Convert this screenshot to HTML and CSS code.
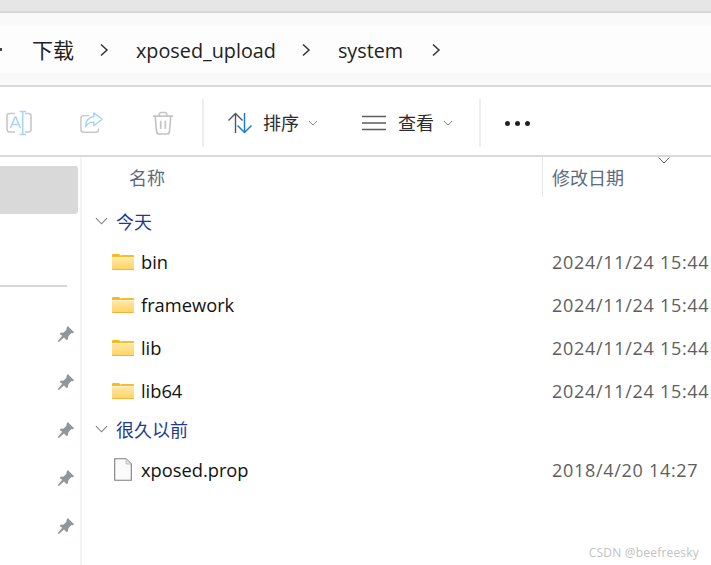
FILE: index.html
```html
<!DOCTYPE html>
<html lang="zh">
<head>
<meta charset="utf-8">
<title>system</title>
<link rel="stylesheet" href="styles.css">
</head>
<body>
<svg class="defs" width="0" height="0" aria-hidden="true">
  <defs>
    <linearGradient id="fg" x1="0" y1="0" x2="0" y2="1"><stop offset="0" stop-color="#ffe9a6"/><stop offset="1" stop-color="#ffd261"/></linearGradient>
    <symbol id="folder" viewBox="0 0 22 17">
      <path d="M0 2a1 1 0 0 1 1-1h6l2 2h-9z" fill="#fbb81d"/>
      <path d="M0 3h8l2-1h11a1 1 0 0 1 1 1v1H0z" fill="#f9bb2b"/>
      <path d="M0 4.500h22V16a1 1 0 0 1-1 1H1a1 1 0 0 1-1-1z" fill="url(#fg)"/>
      <path d="M0 16h22v0a1 1 0 0 1-1 1H1a1 1 0 0 1-1-1z" fill="#f0b43a"/>
    </symbol>
    <symbol id="pin" viewBox="0 0 16 16">
      <path d="M9.600.8l5.600 5.600-1.200 1-1.200-.2-2.700 2.700-.3 2.600-1.100 1.100-2.500-2.500-4.600 4-.9-.9 4-4.600L2.200 8l1.100-1.100 2.600-.3 2.700-2.700-.2-1.200z" fill="#8f979b"/>
    </symbol>
  </defs>
</svg>
<div class="window">
  <div class="titlebar"></div>
  <nav class="address">
    <div class="crumbs">
      <span class="tick"></span>
      <span class="crumb han">下载</span>
      <svg class="chev" viewBox="0 0 10 14"><path d="M2 1.500 8 7l-6 5.500"/></svg>
      <span class="crumb">xposed_upload</span>
      <svg class="chev" viewBox="0 0 10 14"><path d="M2 1.500 8 7l-6 5.500"/></svg>
      <span class="crumb">system</span>
      <svg class="chev last" viewBox="0 0 10 14"><path d="M2 1.500 8 7l-6 5.500"/></svg>
    </div>
  </nav>
  <div class="toolbar">
    <svg class="tool rename" viewBox="0 0 26 26">
      <path d="M9 3.500H3.500A2.500 2.500 0 0 0 1 6v13.500A2.500 2.500 0 0 0 3.500 22H9M19 3.500h3.500A2.500 2.500 0 0 1 25 6v13.500a2.500 2.500 0 0 1-2.500 2.500H19" fill="none" stroke="#c8c8c8" stroke-width="1.600"/>
      <path d="M4.500 18l4.500-11h.8l4.500 11M6 14.500h7M13.500 1.500h6.500M13.500 24.500h6.500M16.700 1.500v23" fill="none" stroke="#a6d3f5" stroke-width="1.500"/>
    </svg>
    <svg class="tool share" viewBox="0 0 26 26">
      <path d="M10 5H4a3 3 0 0 0-3 3v12a3 3 0 0 0 3 3h13a3 3 0 0 0 3-3v-1" fill="none" stroke="#c8c8c8" stroke-width="1.600"/>
      <path d="M15 2l9 7-9 7v-4c-4 0-7 1-9 5 0-6 3-10 9-11z" fill="#fff" stroke="#a6d3f5" stroke-width="1.500" stroke-linejoin="round"/>
    </svg>
    <svg class="tool trash" viewBox="0 0 24 26">
      <path d="M1 5h22M8 5V3a2 2 0 0 1 2-2h4a2 2 0 0 1 2 2v2M3.500 5l1.500 17a3 3 0 0 0 3 2.500h8a3 3 0 0 0 3-2.500l1.500-17M9.500 10v9M14.500 10v9" fill="none" stroke="#c4c4c4" stroke-width="1.800"/>
    </svg>
    <span class="divider first"></span>
    <div class="action sort">
      <svg class="sort-icon" viewBox="0 0 26 22">
        <path d="M8.500 21V1.500M1.500 8.500l7-7 7 7" fill="none" stroke="#555" stroke-width="1.400"/>
        <path d="M17.500 1v19.500M10.500 13.500l7 7 7-7" fill="none" stroke="#1a7fd0" stroke-width="1.500"/>
      </svg>
      <span class="action-label">排序</span>
      <svg class="mini" viewBox="0 0 10 6"><path d="M1 1l4 4 4-4"/></svg>
    </div>
    <div class="action view">
      <svg class="view-icon" viewBox="0 0 24 16">
        <path d="M0 1.500h24M0 8h24M0 14.500h24" fill="none" stroke="#5c5c5c" stroke-width="1.300"/>
      </svg>
      <span class="action-label">查看</span>
      <svg class="mini" viewBox="0 0 10 6"><path d="M1 1l4 4 4-4"/></svg>
    </div>
    <span class="divider second"></span>
    <div class="more"><i></i><i></i><i></i></div>
  </div>
  <div class="main">
    <aside class="sidebar">
      <div class="selected"></div>
      <div class="side-rule"></div>
      <ul class="pins">
        <li><svg class="pin"><use href="#pin"/></svg></li>
        <li><svg class="pin"><use href="#pin"/></svg></li>
        <li><svg class="pin"><use href="#pin"/></svg></li>
        <li><svg class="pin"><use href="#pin"/></svg></li>
        <li><svg class="pin"><use href="#pin"/></svg></li>
      </ul>
    </aside>
    <section class="files">
      <svg class="sort-arrow" viewBox="0 0 12 7"><path d="M.5.500 6 6l5.500-5.500"/></svg>
      <div class="head">
        <div class="head-name">名称</div>
        <div class="head-date">修改日期</div>
      </div>
      <div class="group">
        <svg class="group-chev" viewBox="0 0 14 8"><path d="M1 1l6 6 6-6"/></svg>
        <span>今天</span>
      </div>
      <div class="row"><svg class="folder"><use href="#folder"/></svg><span class="name">bin</span><span class="date">2024/11/24 15:44</span></div>
      <div class="row"><svg class="folder"><use href="#folder"/></svg><span class="name">framework</span><span class="date">2024/11/24 15:44</span></div>
      <div class="row"><svg class="folder"><use href="#folder"/></svg><span class="name">lib</span><span class="date">2024/11/24 15:44</span></div>
      <div class="row"><svg class="folder"><use href="#folder"/></svg><span class="name">lib64</span><span class="date">2024/11/24 15:44</span></div>
      <div class="group later">
        <svg class="group-chev" viewBox="0 0 14 8"><path d="M1 1l6 6 6-6"/></svg>
        <span>很久以前</span>
      </div>
      <div class="row file-row">
        <svg class="file" viewBox="0 0 18 23">
          <path d="M.7.700h11.300l5.300 5.300v16.300H.7z" fill="#fbfbfb" stroke="#7d7d7d" stroke-width="1.100"/>
          <path d="M12 .7V6h5.300z" fill="#e4e4e4" stroke="#b5b5b5" stroke-width=".8"/>
        </svg>
        <span class="name">xposed.prop</span><span class="date">2018/4/20 14:27</span>
      </div>
      <div class="watermark">CSDN @beefreesky</div>
    </section>
  </div>
</div>
</body>
</html>
```
FILE: styles.css
```css
* { box-sizing: border-box; }
html, body { margin: 0; padding: 0; }
body {
  width: 711px;
  height: 565px;
  overflow: hidden;
  background: #fff;
  font-family: "Open Sans", "Noto Sans CJK SC", sans-serif;
  color: #1c1c1c;
}
.defs { position: absolute; }
.window { width: 711px; height: 565px; display: flex; flex-direction: column; overflow: hidden; }
.titlebar { height: 13px; background: #e6e6e6; border-bottom: 2px solid #d6d6d6; }
.address {
  height: 74px;
  background: #f9f9f9;
  border-bottom: 2px solid #d9d9d9;
  padding-top: 13px;
}
.crumbs {
  height: 47px;
  background: #fdfdfd;
  display: flex;
  align-items: center;
  font-size: 19.8px;
  line-height: 47px;
}
.tick { width: 2px; height: 3px; background: #444; margin-right: 30px; }
.crumb { white-space: nowrap; color: #222; padding-top: 2px; }
.crumb.han { font-size: 21px; }
.chev { width: 10px; height: 14px; margin: 0 27px 0 25px; fill: none; stroke: #333; stroke-width: 1.500; }
.chev.last { margin-left: 28px; }
.toolbar {
  height: 68px;
  padding-top: 4px;
  display: flex;
  align-items: center;
  flex: none;
}
.tool { flex: none; }
.rename { width: 26px; height: 26px; margin-left: 6px; }
.share { width: 24px; height: 24px; margin-left: 48px; }
.trash { width: 22px; height: 25px; margin-left: 48px; }
.divider { width: 2px; height: 48px; background: #eeeeee; flex: none; }
.divider.first { margin-left: 28px; }
.divider.second { margin-left: 26px; }
.action { display: flex; align-items: center; flex: none; }
.sort { margin-left: 23px; }
.view { margin-left: 44px; }
.sort-icon { width: 26px; height: 22px; }
.view-icon { width: 24px; height: 16px; }
.action-label { font-size: 18px; color: #2b2b2b; line-height: 24px; }
.sort .action-label { margin-left: 10px; }
.view .action-label { margin-left: 12px; }
.mini { width: 10px; height: 6px; margin-left: 9px; fill: none; stroke: #8a8a8a; stroke-width: 1; }
.more { display: flex; gap: 5px; margin-left: 24px; }
.more i { width: 5px; height: 5px; border-radius: 50%; background: #222; }
.main {
  flex: 1;
  display: flex;
  border-top: 2px solid #d9d9d9;
  min-height: 0;
}
.sidebar {
  width: 82px;
  flex: none;
  border-right: 2px solid #f5f5f5;
  padding-top: 9px;
}
.selected { width: 78px; height: 48px; background: #d9d9d9; border-radius: 0 3px 3px 0; }
.side-rule { width: 67px; height: 2px; background: #d6d6d6; margin-top: 71px; }
.pins { list-style: none; margin: 23px 0 0; padding: 0 5px 0 0; }
.pins li { height: 48px; display: flex; justify-content: flex-end; align-items: center; }
.pin { width: 18px; height: 18px; }
.files { flex: 1; position: relative; min-width: 0; font-size: 18px; }
.sort-arrow {
  position: absolute;
  left: 576px;
  top: 0;
  width: 12px;
  height: 7px;
  fill: none;
  stroke: #666;
  stroke-width: 1;
}
.head { height: 40px; display: flex; align-items: center; color: #5b6b80; font-size: 18px; }
.head-name { width: 461px; height: 40px; padding-left: 47px; padding-top: 1px; line-height: 40px; border-right: 1px solid #e5e5e5; flex: none; }
.head-date { padding-left: 9px; padding-top: 1px; white-space: nowrap; line-height: 40px; }
.group {
  display: flex;
  align-items: center;
  height: 30px;
  margin-top: 9px;
  padding-left: 13px;
  color: #1c3b8f;
  font-size: 18px;
}
.group-chev { width: 13px; height: 8px; margin-right: 8px; fill: none; stroke: #7d7d7d; stroke-width: 1.100; }
.later { margin-top: 2px; }
.row { display: flex; align-items: center; height: 43px; padding-left: 30px; white-space: nowrap; }
.group + .row { margin-top: 4px; }
.folder { width: 22px; height: 17px; flex: none; }
.file { width: 18px; height: 23px; flex: none; margin-left: 2px; margin-right: 2px; }
.name { width: 411px; margin-left: 7px; color: #111; font-size: 18.3px; flex: none; }
.date { color: #5e5e5e; font-size: 18px; letter-spacing: 0.7px; }
.file-row { margin-top: -1px; }
.watermark {
  position: absolute;
  right: 12px;
  bottom: 4px;
  font-size: 12px;
  letter-spacing: 0.2px;
  color: #c2c2c2;
  white-space: nowrap;
}
```
